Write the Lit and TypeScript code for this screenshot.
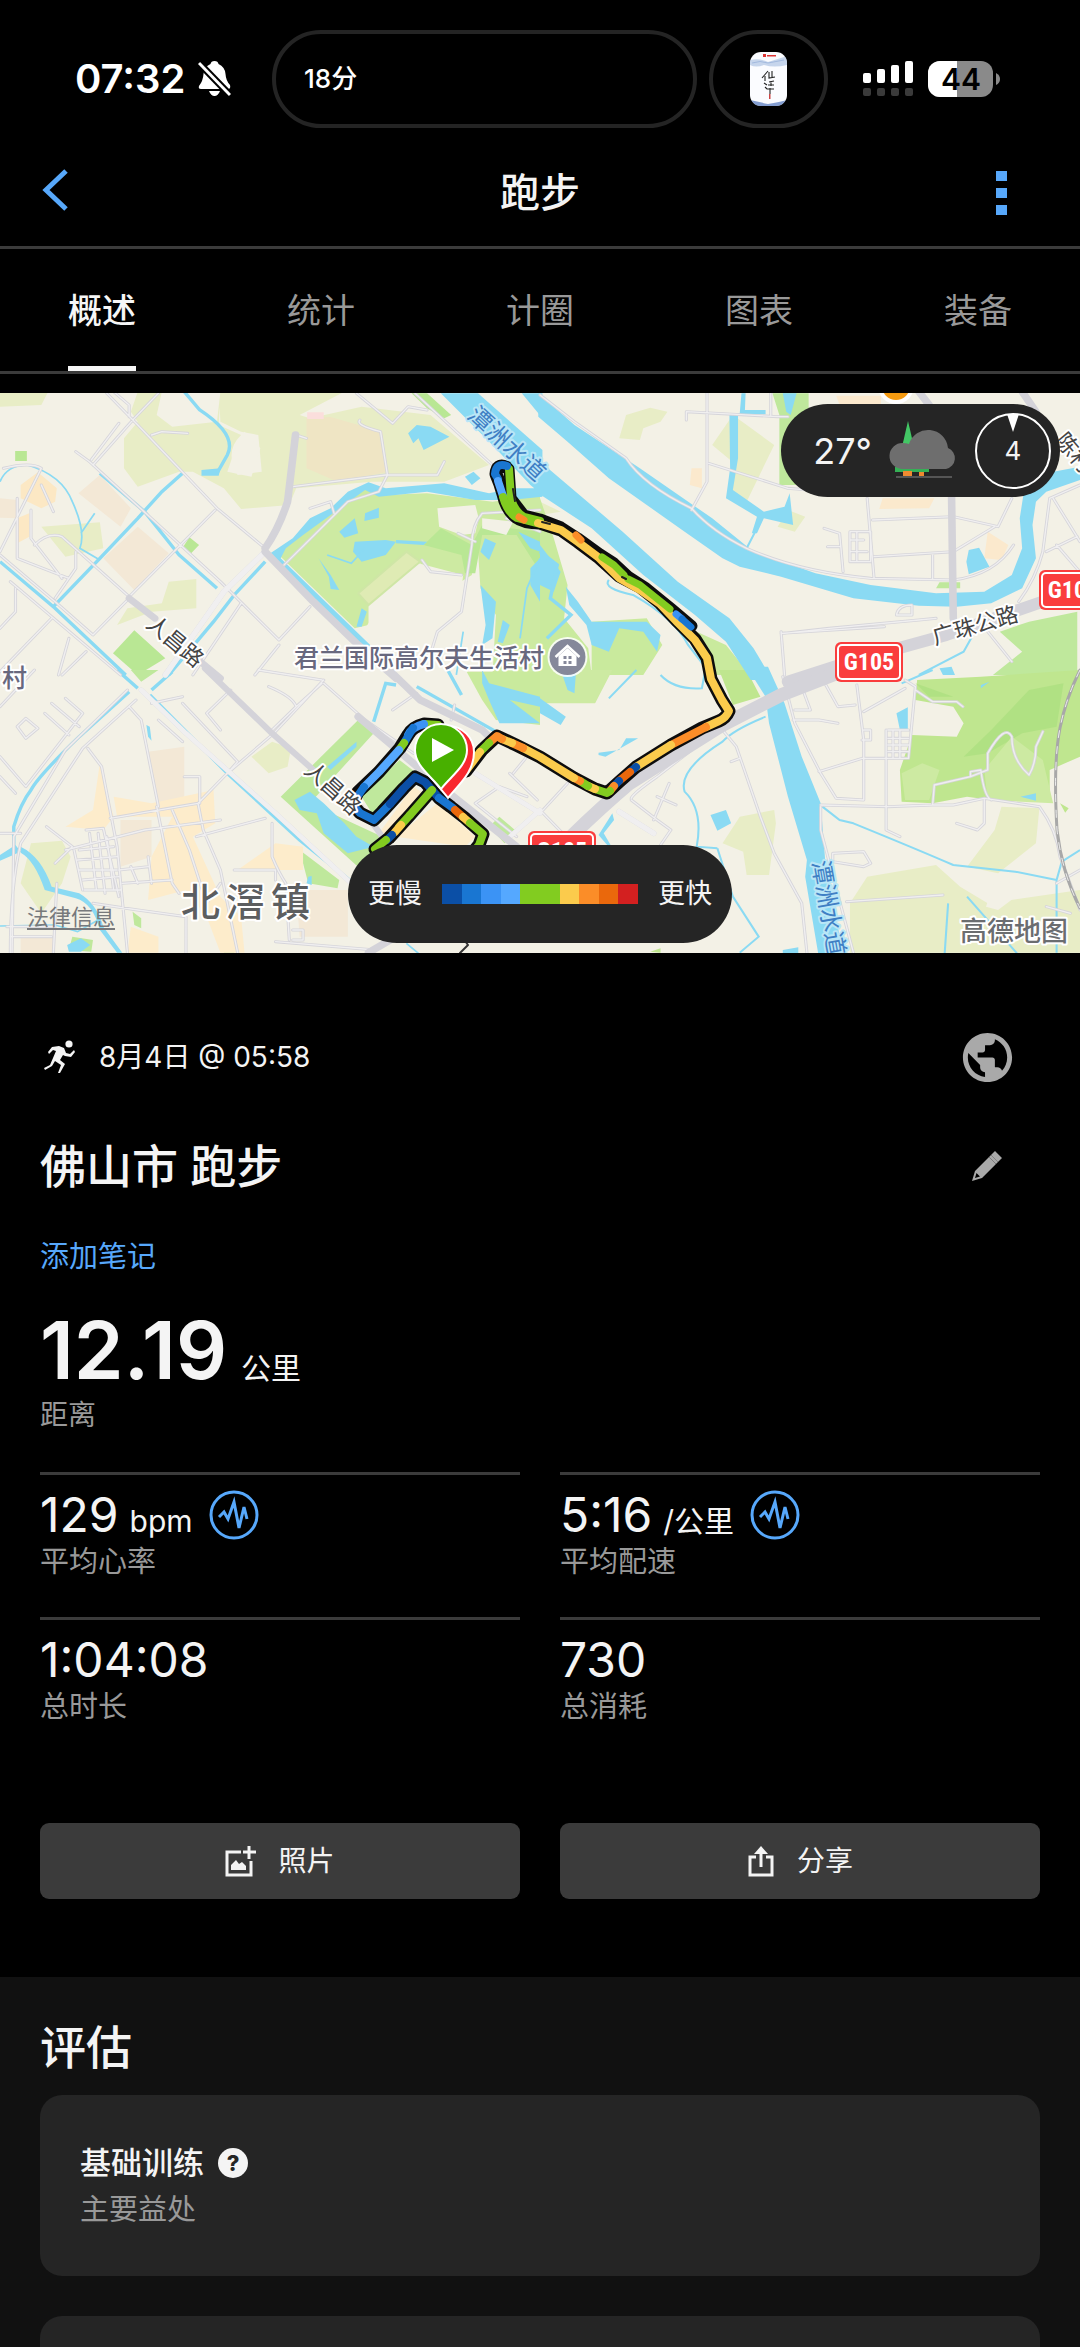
import { LitElement, html, svg, css } from "lit";
import { customElement, property, state } from "lit/decorators.js";

const fontStack = css`Inter, "Noto Sans CJK SC", sans-serif`;

const C = {
  navy: "#0b4fa6",
  blue: "#1976d2",
  sky: "#3b93f5",
  light: "#55a8ff",
  green: "#82cc20",
  yellow: "#fbcb4c",
  orange: "#fb8d28",
  dark: "#ea680c",
  red: "#d32020",
};

const legend = [C.navy, C.blue, C.sky, C.light, C.green, C.green, C.yellow, C.orange, C.dark, C.red];

/* Each quarter of the map is drawn in its own 1568 x 870 grid. */
const NW = "translate(0 -8) scale(.3444 .3333)";
const NE = "translate(540 -8) scale(.3444 .3333)";
const SW = "translate(0 277) scale(.3444 .3333)";
const SE = "translate(540 277) scale(.3444 .3333)";

const areas = svg`
  <g transform=${NW}>
    <path fill="#e8edc6" d="M0 20H140L120 60L0 65ZM400 20H640L635 120L700 150Q650 200 690 270L760 260L750 150L700 140L640 110L635 20H1000L870 90L900 100L1050 65L1250 90L1420 240L1290 290L1080 290L860 310L840 360L700 372L650 310L560 260L520 260L400 305L360 250L360 160L400 110L380 80ZM120 425L290 412L300 490L190 515ZM490 590L570 582V670L440 680L340 720L370 670L470 655Z"/>
    <path fill="#f3f1e6" d="M470 20H640L630 110L500 125L455 90ZM710 140L756 190L730 275L660 260L690 170Z"/>
    <path fill="#efe5c4" d="M890 100L960 96L1110 140L1120 262L980 290L890 250Z"/>
    <path fill="#fbdedc" d="M892 82H940V102H892ZM1280 490L1310 476L1340 500L1336 530L1300 537L1272 515Z"/>
    <path fill="#f3e8d6" d="M290 270L380 370L350 425L228 325ZM400 425L490 505L390 615L300 520ZM0 340L50 345V400L0 398Z"/>
    <path fill="#fce8c4" d="M60 300L110 262L165 310L160 350L120 370L60 340ZM50 400L85 385V455L50 475Z"/>
    <path fill="#cdeaa2" d="M1080 296L1110 330L1240 325L1430 350L1568 330V870H1430L1440 690L1395 610L1385 450L1370 570L1260 640L1220 535L1070 660V720L1030 730L800 500L860 460L960 380L1010 330Z"/>
    <path fill="#b9e794" d="M1280 430L1370 480L1400 420L1568 440V560L1500 450L1400 450L1380 565L1350 565L1340 510L1230 480ZM44 198H78V228H44ZM550 457L578 480L555 505L532 485ZM390 736L480 820L400 870L328 805ZM1195 25H1240L1310 90L1290 100L1240 70Z"/>
    <path fill="#f3f1e6" d="M1270 370L1380 360L1390 400L1380 445L1340 450L1275 425ZM1400 400L1490 410L1470 450L1400 430ZM1215 535L1345 570L1330 690L1395 770V870H1140L1040 760L1080 700V650Z"/>
    <path fill="#dfebb4" stroke="#cfe6a6" stroke-width="6" d="M1180 500L1220 530L1070 660L1040 625Z"/>
  </g>
  <g transform=${NE}>
    <path fill="#e8edc6" d="M250 90L320 68L370 80L350 110L300 130L290 165L230 160ZM560 90L680 180L600 350L545 330L570 240L500 180ZM720 375L770 395L740 440L690 425ZM0 350L60 380L0 390Z"/>
    <path fill="#bfe89c" d="M675 25H780V100L745 300H695V90ZM1160 592H1220V610H1150ZM1560 680V870H1315L1400 800L1335 740L1420 710Z"/>
    <path fill="#fbe9cd" d="M995 340H1145L1130 370L985 372ZM860 32H990V90L870 60ZM1300 440L1360 480L1340 525L1290 520ZM440 250H470V310L435 300Z"/>
    <path fill="#c9ea9d" d="M0 340L40 460L80 600L70 700L140 790L150 870H0ZM150 710L310 700L355 780L300 870H150ZM455 740L540 780L610 870H510L490 790Z"/>
  </g>
  <g transform=${SW}>
    <path fill="#bfe89c" d="M1040 150L1085 190L900 400L1110 500L1060 610L815 380ZM870 540L985 630L980 655L895 640ZM380 0H460L410 35ZM1420 470L1450 440L1495 480L1465 520ZM385 725L410 745V775L390 765ZM650 810H680V848H650ZM1160 270L1210 310L1080 430L1050 380ZM210 800L270 810L265 845L200 840Z"/>
    <path fill="#e8edc6" d="M730 260L790 215L845 235L835 290L780 310ZM90 520L180 512L205 560L180 640L120 730L60 640Z"/>
    <path fill="#f3e8d6" d="M430 245L535 230V410L455 405ZM350 450H440V560L350 590ZM860 660H1010V800H870ZM60 805L160 800V848H60Z"/>
    <path fill="#fdeccb" d="M290 280L330 440L300 480L190 470L270 420ZM330 380L440 400L620 360L625 460L560 500L640 680L700 740L710 848H640L600 740L540 660L430 690L440 560L500 440L340 440ZM1270 400L1380 500L1350 530L1150 500ZM1200 350L1230 370L1120 500L1100 490ZM380 770L460 800V848H370ZM800 520L880 530V600L690 600Z"/>
    <path fill="#c9ea9d" d="M1355 5H1568V165L1440 150L1400 90Z"/>
  </g>
  <g transform=${SE}>
    <path fill="#bfe68f" d="M1280 20L1568 0V260L1480 300V385L1310 390L1240 380L1140 400L1050 395L1045 300L1080 195L1210 200L1230 160L1200 110L1090 90L1095 30ZM520 0L600 0L640 80L560 105ZM1510 400L1535 415L1525 428ZM320 845L350 835V848Z"/>
    <path fill="#a6dd7c" opacity=".6" d="M1420 60L1520 40L1500 170L1400 190L1300 250L1230 260L1310 180ZM1090 40L1200 80L1130 80Z"/>
    <path fill="#cdeaa2" d="M0 0H210L150 120L60 180L0 150ZM1370 200L1460 270L1490 400L1300 390L1290 300ZM1050 310L1110 280L1160 300L1130 390L1060 390Z"/>
    <path fill="#e8edc6" d="M530 520L580 440L680 420L685 460L665 615L600 615L590 545ZM1340 410L1450 415L1440 520L1330 610L1240 590L1320 480ZM950 620L1150 585L1220 650L1300 700L1568 660V848H900V700Z"/>
    <path fill="#f3f1e6" d="M1320 630L1420 650L1330 720L1295 710ZM0 180L60 182L170 130L200 100H0Z"/>
  </g>`;

const water = svg`
  <g fill="#8adaf3" stroke="none">
    <g transform=${NW}>
      <path d="M1280 25H1388L1575 195V330L1540 300L1430 180ZM1515 25H1575V100ZM1490 310H1575V335L1480 345L1380 345L1240 320L1100 335L1060 315L960 390L880 450L830 490L815 520L1075 780V800H1055L785 505L850 460L900 400L960 370L1010 320L1070 292L1120 310L1290 295L1420 325Z"/>
      <path d="M1185 145L1210 120L1250 125L1305 155L1230 195L1215 160L1200 175ZM1350 275L1375 260L1395 280L1370 300ZM985 440L1030 400L1040 445L1000 458ZM1060 385L1100 368V398L1058 408ZM1030 470L1120 465L1150 470L1120 510L1050 530L1025 500ZM1150 465L1240 470L1230 480L1150 475ZM925 520L960 570L985 615L960 612L955 575ZM1050 670L1065 680L1050 725L1035 725ZM1408 460L1440 475L1420 525L1395 500ZM1395 600L1440 650L1430 760L1400 780L1410 720ZM1460 705L1480 720L1460 775L1445 770ZM1505 440L1568 470V500L1540 490ZM1540 550L1568 520V650L1540 600ZM585 255L640 250L635 272H585Z"/>
    </g>
    <g transform=${NE}>
      <path d="M-5 25L100 120L290 250L500 400L620 500L800 565L960 600L1150 625L1290 620L1370 570L1400 490L1393 400L1405 320L1440 270L1568 245V285L1470 320L1440 350L1430 420L1440 520L1400 610L1310 655L1210 665L1100 662L910 640L700 575L580 545L530 520L420 440L200 280L80 170L-5 95Z"/>
      <path d="M-5 225L240 440L400 590L550 700L620 790L675 885H612L540 770L450 690L300 570L150 430L-5 325Z"/>
      <path d="M585 25H597L595 75H655V88H575V220L560 315L650 380L710 365L725 325L735 420L650 400L630 445L615 445L630 395L540 340L552 250L550 90L580 85ZM705 25H745L728 90L715 80ZM1245 495L1275 488L1305 545L1245 568L1238 530ZM0 480L60 560L40 620L0 600ZM75 605L110 650L150 710H310L350 750L340 800L300 740L230 730L200 800L150 780L135 720L85 660ZM1160 850L1195 845L1205 870H1170Z"/>
    </g>
    <g transform=${SW}>
      <path d="M60 530Q120 560 150 650L230 670Q280 700 300 770L355 848H340L290 780Q270 700 220 685L130 660Q100 570 60 548ZM0 555L45 525L60 545L0 572ZM855 390L900 365L940 400L1000 460L1035 500L1085 530L1010 550L940 490L920 430L870 420ZM950 290L1035 215V230L960 300ZM195 825L235 805L262 825L235 845H200ZM425 165L435 170L440 212L430 200ZM895 620L905 618V645L890 640Z"/>
      <path d="M1400 0L1420 40L1568 80V110L1480 90L1568 160L1450 160L1420 90L1400 40Z"/>
    </g>
    <g transform=${SE}>
      <path d="M600 -10H662L710 100L760 260L815 400L828 570L880 852H808L770 620L775 570L720 380L665 160L655 80Z"/>
      <path d="M495 435L540 420L555 460L515 482ZM1035 130L1068 112V182L1045 180ZM1395 380L1440 370V392ZM0 85L75 140L60 165L0 130ZM705 840L750 832V850H705ZM170 495L210 430L215 450L185 490L205 525H195ZM1280 45L1305 35L1280 55ZM250 205L285 205L190 260L170 255V248L230 240ZM60 0H105L100 70L80 60Z"/>
    </g>
  </g>
  <g fill="none" stroke="#8adaf3" stroke-width="10">
    <g transform=${NW}>
      <path d="M535 20L580 75Q690 150 660 210L630 265M530 265L470 320L400 400L290 520L155 665M290 265L420 380L520 510L630 610M0 530L160 670L365 870M490 870L620 710L680 630L770 530"/>
      <path stroke-width="5" d="M0 290Q20 240 80 240Q180 270 210 350Q250 440 232 490L290 525M235 445L275 385M950 510L1020 535L1060 490M1345 740L1325 870M1568 520L1530 610L1510 760"/>
    </g>
    <g transform=${NE}>
      <path stroke-width="6" d="M200 585Q180 610 270 630Q390 700 430 780L490 860M600 490L625 440M1100 870L1230 800L1260 745"/>
      <path d="M0 500L50 540L30 640L90 690L20 760"/>
    </g>
    <g transform=${SW}>
      <path d="M340 0L400 55M375 65L230 200Q110 320 90 360Q60 400 40 470V530M500 5L440 60M435 75L660 310L870 510L1015 630M1210 50L1440 185M1085 155L1120 40L1150 45M1300 0L1340 75"/>
      <path stroke-width="5" d="M0 768L160 765L225 785L285 750M1180 820L1215 850"/>
    </g>
    <g transform=${SE}>
      <path stroke-width="6" d="M655 140Q560 180 530 215Q400 300 420 365Q475 420 455 530L515 535M515 535L560 680L635 800L580 848M820 410L870 450L910 460Q1100 540 1200 585L1380 605L1500 630M1500 630L1515 575L1568 540M1500 630V848M1240 680L1385 850M1185 700L1175 850M350 15Q390 60 470 55L480 0M200 85L280 0M1050 40L1140 0"/>
    </g>
  </g>`;

const roadLines = svg`
  <g transform=${NW}>
    <path d="M310 25L400 120L630 370L770 490M460 25L390 100L270 240M345 115L265 225M330 20L375 60V95M220 200L260 230L640 590L810 765L900 665M440 150L470 140L545 145M625 375L380 630M890 160L860 150M850 305L1120 270L1270 270L1290 230M1045 105Q1030 120 1105 140L1125 270L1100 320L1010 350L820 545M900 370L960 350L970 385M1035 25L1140 115L1185 65L1240 75M1225 525L1250 560L1340 570M1205 25L1430 240M1568 375L1400 385Q1370 420 1370 480L1340 680L1270 740L1255 790M1330 445L1380 470M0 500L120 250Q90 230 10 250M120 300L155 380M50 340L50 520L200 580M90 375V460L180 580M100 480Q140 440 180 455L375 635M220 500V550L160 640M375 640L270 750L160 650L0 510M45 610V680L0 730M150 700L0 860M30 590L350 870M250 800L180 870M700 655L560 870M200 760L170 870M810 780L740 870M1470 400L1568 440"/>
    <path stroke-width="16" d="M770 500L650 620L480 870"/>
  </g>
  <g transform=${NE}>
    <path d="M0 30L100 110L250 220Q300 300 440 370Q500 440 600 490Q750 560 960 580L1200 585Q1320 570 1375 480M425 105V80L690 95H720M670 25V90M485 25V290L440 375M490 235L720 310L950 330M950 340L970 580M965 405L1200 395L1330 425L1370 340M970 515L1200 500L1320 425M1140 510V580M825 430L870 445L880 560M835 485H870M900 440H960V530H900ZM900 465H940M900 500H950M920 440V530M700 740L710 870M700 745L1000 725M710 745L840 730L1100 705L1150 700M1490 340L1568 470M1480 340L1460 500Q1440 580 1390 650M1470 500L1560 455M1568 300L1480 340M1600 600L1500 480M1035 690Q1040 660 1080 660V690ZM1300 740L1370 830"/>
  </g>
  <g transform=${SW}>
    <path d="M395 90L240 235L60 520Q30 650 30 850M370 60L190 240L40 500L35 850M375 110L410 150L460 410M100 0L0 110M190 85L240 130L75 350L0 260M75 145L110 175L75 205L50 170ZM150 100L230 170M130 130L200 195M0 320L45 370M0 490H60M255 235L295 290L340 530L370 848M135 470L210 530L160 580M320 445L575 400L660 310L795 190M660 310L690 275L530 100M530 215L460 150M440 100L530 80M670 60L600 130L640 180M780 50Q850 80 860 110L790 180M795 190L940 30M935 30L750 0M940 40L1060 150L1200 250M1210 70L1140 120M1320 105L1310 150M860 110L935 40M570 500L770 445M455 410L500 640L520 670M500 420L550 540L600 700M575 400L590 480L640 600L690 848M190 540L420 480L640 450M680 600L800 600V630M790 460V560Q810 610 830 640L840 810M535 320H580V400M250 480L300 475L345 680M215 540L240 660M230 540L330 530M225 570L340 560M230 600L340 600M240 630L345 620M245 660H350M260 490L280 660M285 490L305 670M310 500L330 660M345 600L430 590M355 640L500 630M380 590L400 640M430 560L440 640M20 770H160M165 640L155 848M270 700L400 720L540 740V848M30 800H150M800 815L1090 840M640 640L600 700M850 780H880V810H850M1380 400L1450 350L1530 380M1380 400L1500 500M1560 390L1480 310M1490 310L1530 260"/>
    <path stroke-width="14" d="M0 0M410 60L540 190L800 430L1020 640M1380 310L1568 430M1470 510L1568 420"/>
  </g>
  <g transform=${SE}>
    <path d="M705 20L740 160L815 310L860 385L940 390V210L920 45M710 60L760 50L785 120H740M830 45L865 110L915 105M735 150H810L865 160M810 305L935 265H1070L1090 50L1060 30M940 125L1060 55M940 180H960V210H935M1005 180V480L1045 500M1010 180H1070M1010 205H1070M1010 225H1070M1010 245H1070M1025 180V265M1045 180V265M1090 60L1140 95L1210 95L1228 110M815 405L1010 410L1140 405H1200L1290 385L1450 410Q1500 480 1510 560L1568 720M1140 405L1145 345L1250 320L1300 300V250Q1350 160 1370 200Q1370 270 1420 315Q1440 280 1440 230L1460 185M1250 320V305L1280 300Q1290 380 1310 390M1290 390V460L1270 480L1210 460M815 410V480L910 848M850 550L940 545L960 580L940 590L850 575ZM890 695L1170 675M530 180L570 230L640 440L680 550L760 700L775 848M375 340L330 450M265 390L340 450L380 480L340 540M265 385Q270 370 340 320L440 240M340 380L395 405M0 430L80 340M580 265L555 275M1540 730L1470 710M1500 640L1568 600M0 420L160 590"/>
    <path stroke-width="16" d="M230 425L330 490"/>
  </g>`;

const mainRoads = svg`
  <g transform=${NW}>
    <path stroke-width="22" d="M858 150L850 220L835 350Q810 430 770 490M770 500L910 650L1040 780L1150 880"/>
    <path stroke-width="20" d="M375 640L450 700M570 820L640 880"/>
  </g>
  <g transform=${NE}>
    <path stroke-width="22" d="M1195 330L1200 700M1100 20L1130 60M1400 20L1440 80"/>
    <path stroke-width="36" d="M720 890L900 830L1180 750L1460 650L1568 610"/>
  </g>
  <g transform=${SW}>
    <path stroke-width="18" d="M595 -5L790 190L910 300M1040 400L1110 500"/>
    <path stroke-width="22" d="M1130 0L1220 90L1400 180L1430 210M1040 140L1280 350L1500 530M1070 848L1150 800"/>
  </g>
  <g transform=${SE}>
    <path stroke-width="40" d="M90 500Q180 410 260 340L530 165L700 75L900 -5"/>
  </g>`;

type Seg = [string, string];
const trackOutline = [
  "M506 74Q497 70 496 81Q500 90 503 101Q506 116 516 124Q524 130 540 130L561 137L578 149L598 164L619 183L640 194L660 210L678 229L695 246L707 265L711 286L722 307L729 318Q726 325 719 328L702 335L671 352L636 374L619 389L607 400L595 396L574 385L540 364L516 352L497 343L482 357L466 378",
  "M438 332L424 331Q412 334 408 342L400 355L379 379L358 399L352 411L360 420L374 427L382 419L404 395L415 384L425 389L439 405L451 414L465 425L483 441L479 452L474 458",
  "M432 397L410 422L389 445L375 456",
];
const trackSegments: Seg[] = [
  [C.green, "M509 76L511 105Q514 118 524 124L540 128"],
  [C.blue, "M507 73Q496 69 495 81L498 86"],
  [C.light, "M498 88L503 103"],
  [C.green, "M503 104Q507 119 517 125L540 131"],
  [C.yellow, "M538 130L561 137L578 149L598 164L619 185L640 197L660 211L678 230L695 247L707 265L711 286L722 307L729 318Q726 325 719 328L706 334"],
  [C.orange, "M706 334L671 352"],
  [C.yellow, "M671 352L636 374"],
  [C.navy, "M636 374L630 379"],
  [C.dark, "M630 379L619 388"],
  [C.navy, "M619 388L614 393"],
  [C.orange, "M614 393L610 398"],
  [C.green, "M610 398L607 400L595 396"],
  [C.yellow, "M595 396L588 393"],
  [C.green, "M588 393L580 388"],
  [C.orange, "M580 388L574 385"],
  [C.yellow, "M574 385L540 364L523 355"],
  [C.orange, "M523 355L512 350"],
  [C.yellow, "M512 350L502 346"],
  [C.orange, "M502 346L497 343L489 350"],
  [C.green, "M489 350L480 359"],
  [C.yellow, "M480 359L466 378"],
  [C.green, "M438 332L424 331"],
  [C.sky, "M424 331Q412 334 408 342"],
  [C.blue, "M413 335L404 350"],
  [C.green, "M404 350L399 357"],
  [C.light, "M399 357L379 379L364 394"],
  [C.blue, "M364 394L352 411L360 420L374 427L382 419L390 411"],
  [C.navy, "M390 411L404 395L415 384L425 389L439 405"],
  [C.blue, "M439 405L453 415"],
  [C.dark, "M455 417L463 424"],
  [C.yellow, "M463 424L470 430"],
  [C.green, "M470 430L483 441L479 452L474 458"],
  [C.green, "M432 397L410 422"],
  [C.green, "M410 422L399 434"],
  [C.yellow, "M401 432L395 439"],
  [C.navy, "M392 442L387 447"],
  [C.green, "M386 447L375 456"],
];
const trackThin: Seg[] = [
  [C.orange, "M576 142L581 147"],
  [C.green, "M602 164L614 172L624 182M628 186L640 192L655 204L670 216"],
  [C.sky, "M676 221L682 226"],
  [C.blue, "M682 226L691 234"],
  [C.orange, "M519 124L524 127"],
];

const badge = (x: number, y: number) => svg`
  <g>
    <rect x=${x} y=${y} width="68" height="40" rx="6" fill="#fa3d3d"/>
    <rect x=${x + 3} y=${y + 3} width="62" height="34" rx="4" fill="none" stroke="#fff" stroke-width="2"/>
    <text class="badge" x=${x + 34} y=${y + 28} text-anchor="middle">G105</text>
  </g>`;

@customElement("route-map")
class RouteMap extends LitElement {
  static styles = css`
    :host { display: grid; grid-template-areas: "map"; height: 560px; overflow: hidden; position: relative; font-family: ${fontStack}; }
    .canvas { grid-area: map; width: 100%; height: 560px; display: block; background: #f3f1e6; }
    .halo { paint-order: stroke; stroke: #fff; stroke-width: 4px; stroke-linejoin: round; }
    .river { fill: #3f7fc4; stroke: #b9e6f7; font-size: 24px; }
    .road { fill: #444; font-size: 22px; }
    .place { fill: #68687e; font-size: 25px; font-weight: 500; }
    .town { fill: #5c5e60; font-size: 39px; font-weight: 500; }
    .brand { fill: #6b6d70; font-size: 27px; font-weight: 500; }
    .badge { fill: #fff; font: 700 24px "Liberation Sans Narrow", "Roboto Condensed", Roboto, sans-serif; }
    .legal { position: absolute; left: 27px; bottom: 22px; font-size: 22px; line-height: 28px; color: #77797c; text-decoration: underline; text-underline-offset: 3px; text-decoration-thickness: 2px; }
    .pill { background: #252525; color: #f4f4f4; border-radius: 49px; display: flex; align-items: center; position: absolute; box-sizing: border-box; }
    .weather { top: 11px; right: 20px; height: 93px; padding: 0 8px 0 32px; gap: 16px; }
    .temp { font-size: 36px; line-height: 44px; }
    .legend { bottom: 10px; left: 50%; transform: translateX(-50%); height: 98px; padding: 0 20px; gap: 20px; font-size: 27px; line-height: 40px; white-space: nowrap; }
    .scale { display: flex; height: 20px; width: 196px; }
    .scale i { flex: 1; }
    .temp, .legend span { white-space: nowrap; }
  `;

  render() {
    return html`
      <svg class="canvas" viewBox="0 0 1080 560" preserveAspectRatio="xMidYMid slice" role="img" aria-label="路线地图">
        ${areas} ${water}
        <g fill="none" stroke-linecap="round" stroke-linejoin="round">
          <g stroke="#d6d5da" stroke-width="9">${roadLines}</g>
          <g stroke="#f0eff0" stroke-width="4">${roadLines}</g>
          <g stroke="#d4d3d9">${mainRoads}</g>
          <path d="M1080 277Q1066 305 1060 335Q1053 370 1057 437Q1062 480 1080 515" stroke="#a8a8a8" stroke-width="3"/>
          <path d="M1080 277Q1066 305 1060 335Q1053 370 1057 437Q1062 480 1080 515" stroke="#eee" stroke-width="1" stroke-linecap="butt" stroke-dasharray="8 8"/>
          <path d="M460 560l8-8 -6-8" stroke="#333" stroke-width="2"/>
        </g>
        <circle cx="896" cy="-7" r="18" fill="#fff"/><circle cx="896" cy="-7" r="14" fill="#f59a10"/>
        <g fill="none" stroke-linejoin="round" stroke-linecap="round">
          ${trackOutline.map((d) => svg`<path d=${d} stroke="#0d0d0d" stroke-width="13"/>`)}
          <path d="M509 76L511 105L524 122L540 126L561 134L578 145L600 161L614 170L628 183L645 194L672 216L692 233" stroke="#0d0d0d" stroke-width="11"/>
          ${trackSegments.map(([c, d]) => svg`<path d=${d} stroke=${c} stroke-width="8"/>`)}
          ${trackThin.map(([c, d]) => svg`<path d=${d} stroke=${c} stroke-width="7"/>`)}
          <path d="M542 129l8 2M622 184l4 2M513 96l2 12" stroke="#222" stroke-width="2"/>
        </g>
        <g>
          <text class="halo river" transform="translate(466 24) rotate(43)">潭洲水道</text>
          <text class="halo river" transform="translate(812 469) rotate(80)">潭洲水道</text>
          <text class="halo road" transform="translate(145 233) rotate(40)">人昌路</text>
          <text class="halo road" transform="translate(303 379) rotate(42)">人昌路</text>
          <text class="halo road" transform="translate(935 252) rotate(-16)">广珠公路</text>
          <text class="halo road" transform="translate(1054 48) rotate(50)">陈村</text>
          <text class="halo place" x="294" y="274">君兰国际高尔夫生活村</text>
          <text class="halo place" x="2" y="294">村</text>
          <text class="halo town" x="181 226 271" y="523">北滘镇</text>
          <text class="halo brand" x="960" y="548">高德地图</text>
        </g>
        ${badge(835, 249)} ${badge(1039, 177)} ${badge(528, 438)}
        <g transform="translate(567.5 264)">
          <circle r="20" fill="#fff" opacity=".85"/><circle r="18" fill="#85889a"/>
          <path d="M-12 0L0-11L12 0" fill="none" stroke="#fff" stroke-width="2.4"/>
          <path d="M-9 -1L0-9L9-1V9H-9Z" fill="#fff"/>
          <path d="M-4 -1h3v3h-3zM1-1h3v3h-3zM-4 4h3v3h-3zM1 4h3v3h-3z" fill="#85889a"/>
        </g>
        <path d="M448 405C438 392 422 378 422 359a26 26 0 0 1 52 0C474 380 458 392 448 405Z" fill="#f9282f" stroke="#fff" stroke-width="2"/>
        <path d="M441 396C431 383 415 373 415 357a26 26 0 0 1 52 0C467 373 451 383 441 396Z" fill="#48b000" stroke="#fff" stroke-width="2"/>
        <path d="M432 345L454 357L432 369Z" fill="#fff"/>
      </svg>
      <a class="legal" href="#legal">法律信息</a>
      <div class="pill weather">
        <span class="temp">27°</span>
        <svg width="70" height="60" viewBox="0 0 70 60" aria-hidden="true">
          <path d="M20 0L26 26H14Z" fill="#43c765"/>
          <path d="M7 46h34v5H7z" fill="#35b055"/>
          <path d="M15 50h9v5h-9zM31 51h5v4h-5z" fill="#f08a30"/>
          <path d="M8 55h56v2H8z" fill="#555"/>
          <path d="M14 48A13 13 0 0 1 15 22Q18 22 21 23A20 20 0 0 1 60 27A11 11 0 0 1 58 48Z" fill="#6e6e6e"/>
        </svg>
        <svg width="78" height="78" viewBox="0 0 78 78" role="img" aria-label="风速">
          <circle cx="39" cy="39" r="37" fill="none" stroke="#fff" stroke-width="2"/>
          <path d="M33 2H45L39 20Z" fill="#fff"/>
          <text x="39" y="48" text-anchor="middle" font-size="26" fill="#f4f4f4">4</text>
        </svg>
      </div>
      <div class="pill legend">
        <span>更慢</span>
        <div class="scale">${legend.map((c) => html`<i style="background:${c}"></i>`)}</div>
        <span>更快</span>
      </div>
    `;
  }
}

@customElement("stat-item")
class StatItem extends LitElement {
  @property() value = "";
  @property() unit = "";
  @property() label = "";
  @property({ type: Boolean }) chart = false;

  static styles = css`
    :host { display: block; border-top: 3px solid #3b3b3b; padding-top: 11px; font-family: ${fontStack}; color: #f4f4f4; }
    .row { display: flex; align-items: center; height: 58px; gap: 16px; }
    .text { display: flex; align-items: baseline; gap: 11px; white-space: nowrap; }
    .value { font-size: 48px; line-height: 58px; }
    .unit { font-size: 30px; line-height: 40px; }
    .label { font-size: 29px; line-height: 36px; color: #999; }
    .chart { border: 0; padding: 0; background: none; display: flex; cursor: pointer; }
  `;

  render() {
    return html`
      <div class="row">
        <div class="text">
          <span class="value">${this.value}</span>
          ${this.unit ? html`<span class="unit">${this.unit}</span>` : ""}
        </div>
        ${this.chart
          ? html`<button class="chart" aria-label="${this.label}图表">
              <svg width="50" height="50" viewBox="0 0 50 50" fill="none" stroke="#57a8fb">
                <circle cx="25" cy="25" r="23" stroke-width="3"/>
                <path d="M10 27L15 22L19 29L25 12L30 38L35 17L38 29" stroke-width="3"/>
              </svg>
            </button>`
          : ""}
      </div>
      <div class="label">${this.label}</div>
    `;
  }
}

@customElement("app-root")
class AppRoot extends LitElement {
  @state() private active = 0;
  private tabs = ["概述", "统计", "计圈", "图表", "装备"];

  static styles = css`
    :host { display: flex; flex-direction: column; min-height: 100vh; background: #000; color: #f4f4f4; font-family: ${fontStack}; }
    button { font: inherit; color: inherit; border: 0; padding: 0; background: none; cursor: pointer; }
    svg { display: block; flex: none; }
    h1, h2, h3, p { margin: 0; }
    .status { display: flex; align-items: center; padding: 30px 80px 12px 75px; color: #fff; }
    .clock { display: flex; align-items: center; gap: 13px; width: 197px; font-size: 40px; line-height: 50px; font-weight: 600; }
    .island { box-sizing: border-box; height: 98px; border: 4px solid #242424; border-radius: 49px; display: flex; align-items: center; }
    .timer { flex: 1; padding-left: 28px; margin-right: 12px; font-size: 26px; line-height: 32px; font-weight: 500; }
    .media { width: 119px; justify-content: center; margin-right: 35px; }
    .signal { margin-right: 15px; }
    .bar { height: 106px; display: grid; grid-template-columns: 1fr auto 1fr; align-items: center; border-bottom: 3px solid #3b3b3b; padding: 0 42px; }
    .bar h1 { font-size: 40px; line-height: 56px; font-weight: 500; }
    .bar .back { padding-bottom: 7px; justify-self: start; }
    .bar .more { justify-self: end; padding-right: 30px; }
    .tabs { display: flex; justify-content: space-between; padding: 0 68px; border-bottom: 3px solid #3b3b3b; margin-bottom: 19px; }
    .tab { box-sizing: border-box; height: 122px; padding-top: 7px; border-bottom: 5px solid transparent; font-size: 34px; line-height: 44px; color: #999; }
    .tab.on { color: #f6f6f6; border-color: #f6f6f6; font-weight: 500; }
    .summary { padding: 74px 40px 78px; }
    .line { display: flex; align-items: center; height: 60px; padding-right: 28px; }
    .line .act { margin-left: auto; width: 50px; display: flex; justify-content: center; }
    .when { font-size: 28px; line-height: 40px; margin-left: 22px; }
    .name { margin-top: 49px; }
    h2 { font-size: 46px; line-height: 60px; font-weight: 500; }
    .note { display: inline-block; margin-top: 41px; font-size: 29px; line-height: 40px; color: #57a8fb; text-decoration: none; }
    .total { display: flex; align-items: baseline; gap: 14px; margin-top: 33px; height: 80px; }
    .total .big { font-size: 80px; line-height: 80px; font-weight: 600; }
    .total .unit { font-size: 30px; line-height: 40px; }
    .distance { font-size: 28px; line-height: 40px; color: #999; margin-top: 5px; }
    .stats { display: grid; grid-template-columns: 1fr 1fr; gap: 37px 40px; margin-top: 37px; }
    .actions { display: grid; grid-template-columns: 1fr 1fr; gap: 40px; margin-top: 98px; }
    .action { height: 76px; border-radius: 9px; background: #3b3b3b; display: flex; align-items: center; justify-content: center; gap: 22px; font-size: 28px; line-height: 40px; }
    .review { flex: 1; display: flex; flex-direction: column; background: #111; padding: 40px 40px 0; }
    .card { background: #252525; border-radius: 22px; padding: 46px 40px; margin-top: 18px; }
    .card .head { display: flex; align-items: center; gap: 14px; height: 44px; }
    .card h3 { font-size: 31px; line-height: 44px; font-weight: 500; }
    .card p { font-size: 29px; line-height: 40px; color: #999; margin-top: 5px; }
    .next { flex: 1; margin-top: 40px; padding: 0; min-height: 31px; border-radius: 22px 22px 0 0; }
  `;

  render() {
    return html`
      <div class="status">
        <div class="clock">
          <span>07:32</span>
          <svg width="33" height="36" viewBox="0 0 33 36" aria-label="静音">
            <path d="M16.500 0Q20 0 20.500 3Q27 6 27.500 13Q28 20 32 24Q33 28 30 28H3Q0 28 1 25Q5 20 5.500 13Q6 6 12.500 3Q13 0 16.500 0ZM11 30H22Q20 35 16.500 35Q13 35 11 30Z" fill="#fff"/>
            <path d="M0 1L32 34" stroke="#000" stroke-width="7"/>
            <path d="M1 2L32 34" stroke="#fff" stroke-width="3"/>
          </svg>
        </div>
        <div class="island timer">18分</div>
        <div class="island media">
          <svg width="37" height="54" viewBox="0 0 37 54" aria-hidden="true">
            <defs><clipPath id="cover"><rect width="37" height="54" rx="11"/></clipPath></defs>
            <g clip-path="url(#cover)">
              <rect width="37" height="54" fill="#fbfcff"/>
              <path d="M0 8Q10 6 18 10Q28 7 37 4V13Q24 16 14 13Q6 16 0 13Z" fill="#b4c8e6" opacity=".75"/>
              <path d="M2 11Q10 8 18 11L34 8" stroke="#8aa6d4" fill="none" opacity=".6"/>
              <path d="M0 48Q9 50 18 52Q30 50 37 48V54H0Z" fill="#6585c4" opacity=".8"/>
              <path d="M13 2h3v3h-3zM17 3h9v1.500h-9z" fill="#dd3434"/>
              <path d="M19 42h1.500v5h-1.500z" fill="#c44"/>
            </g>
            <path d="M18 19L12 26M15 24V29M19 20V26L25 25M22 19V26M14 31L17 33M19 30L24 29M21 29V34M18 33H24M15 35L17 37H24M20 36V42" stroke="#222" stroke-width="1.100" fill="none"/>
          </svg>
        </div>
        <svg class="signal" width="50" height="36" viewBox="0 0 50 36" aria-label="信号">
          <g fill="#fff"><rect y="12" width="8" height="10" rx="2"/><rect x="14" y="8" width="8" height="14" rx="2"/><rect x="28" y="4" width="8" height="18" rx="2"/><rect x="42" width="8" height="22" rx="2"/></g>
          <g fill="#3a3a3a"><rect y="27" width="8" height="8" rx="2"/><rect x="14" y="27" width="8" height="8" rx="2"/><rect x="28" y="27" width="8" height="8" rx="2"/><rect x="42" y="27" width="8" height="8" rx="2"/></g>
        </svg>
        <svg width="72" height="36" viewBox="0 0 72 36" aria-label="电量">
          <defs><clipPath id="cell"><rect width="65" height="36" rx="12"/></clipPath></defs>
          <g clip-path="url(#cell)"><rect width="65" height="36" fill="#8a8a8a"/><rect width="29" height="36" fill="#fff"/></g>
          <path d="M68 12Q72 14 72 18T68 24Z" fill="#8a8a8a"/>
          <text x="33" y="29" text-anchor="middle" font-size="30" font-weight="600" fill="#000">44</text>
        </svg>
      </div>

      <header class="bar">
        <button class="back" aria-label="返回">
          <svg width="26" height="42" viewBox="0 0 26 42" fill="none" stroke="#57a8fb" stroke-width="5"><path d="M24 2L4 21L24 40"/></svg>
        </button>
        <h1>跑步</h1>
        <button class="more" aria-label="更多">
          <svg width="12" height="44" viewBox="0 0 12 44" fill="#57a8fb"><path d="M0 0H11V10H0ZM0 17H11V27H0ZM0 34H11V44H0Z"/></svg>
        </button>
      </header>

      <nav class="tabs" role="tablist">
        ${this.tabs.map(
          (t, i) => html`<button role="tab" class="tab ${i === this.active ? "on" : ""}" aria-selected=${i === this.active ? "true" : "false"} @click=${() => (this.active = i)}>${t}</button>`
        )}
      </nav>

      <route-map></route-map>

      <section class="summary">
        <div class="line">
          <svg width="37" height="34" viewBox="0 0 37 34" aria-hidden="true">
            <circle cx="29" cy="4" r="3.600" fill="#f4f4f4"/>
            <path d="M12 7L19 6L24 8L26 13L30 14L34 10L35 12L31 17L25 16L23 15L20 20L25 24L20 33L18 33L21 25L15 21L12 26L5 30L4 28L10 25L16 11L13 10L9 14L8 12Z" fill="#f4f4f4"/>
          </svg>
          <span class="when">8月4日 @ 05:58</span>
          <button class="act" aria-label="公开">
            <svg width="59" height="59" viewBox="0 0 24 24" fill="#a9a9a9"><path d="M12 2C6.480 2 2 6.480 2 12s4.480 10 10 10 10-4.480 10-10S17.520 2 12 2zm-1 17.930c-3.950-.49-7-3.850-7-7.930 0-.62.080-1.210.21-1.790L9 15v1c0 1.100.9 2 2 2v1.930zm6.900-2.540c-.26-.81-1-1.390-1.900-1.390h-1v-3c0-.55-.45-1-1-1H8v-2h2c.55 0 1-.45 1-1V7h2c1.100 0 2-.9 2-2v-.41c2.930 1.190 5 4.060 5 7.410 0 2.080-.8 3.970-2.100 5.390z"/></svg>
          </button>
        </div>
        <div class="line name">
          <h2>佛山市 跑步</h2>
          <button class="act" aria-label="编辑">
            <svg width="30" height="30" viewBox="0 0 30 30" fill="#a9a9a9"><path d="M23 0L30 7L26 11L19 4ZM17 6L24 13L10 27L0 30L3 20ZM4.500 22L3 27L8 25.500Z" fill-rule="evenodd"/><path d="M17 6L19 4L26 11L24 13Z"/></svg>
          </button>
        </div>
        <a class="note" href="#note">添加笔记</a>
        <div class="total"><span class="big">12.19</span><span class="unit">公里</span></div>
        <div class="distance">距离</div>
        <div class="stats">
          <stat-item value="129" unit="bpm" label="平均心率" chart></stat-item>
          <stat-item value="5:16" unit="/公里" label="平均配速" chart></stat-item>
          <stat-item value="1:04:08" label="总时长"></stat-item>
          <stat-item value="730" label="总消耗"></stat-item>
        </div>
        <div class="actions">
          <button class="action">
            <svg width="31" height="31" viewBox="0 0 31 31" fill="none" stroke="#f4f4f4" stroke-width="3"><path d="M16 6H2V29H26V15M24 0V13M18 6H31"/><path d="M6 24V19L11 14L14 18L17 16L21 20V24Z" fill="#f4f4f4" stroke="none"/></svg>
            <span>照片</span>
          </button>
          <button class="action">
            <svg width="28" height="31" viewBox="0 0 28 31" fill="none" stroke="#f4f4f4" stroke-width="3"><path d="M9 11H3V29H25V11H19M14 21V4"/><path d="M7 8L14 0L21 8Z" fill="#f4f4f4" stroke="none"/></svg>
            <span>分享</span>
          </button>
        </div>
      </section>

      <section class="review">
        <h2>评估</h2>
        <div class="card">
          <div class="head">
            <h3>基础训练</h3>
            <button aria-label="帮助">
              <svg width="30" height="30" viewBox="0 0 30 30"><circle cx="15" cy="15" r="15" fill="#f4f4f4"/><text x="15" y="23" text-anchor="middle" font-size="22" font-weight="800" fill="#252525">?</text></svg>
            </button>
          </div>
          <p>主要益处</p>
        </div>
        <div class="card next"></div>
      </section>
    `;
  }
}
